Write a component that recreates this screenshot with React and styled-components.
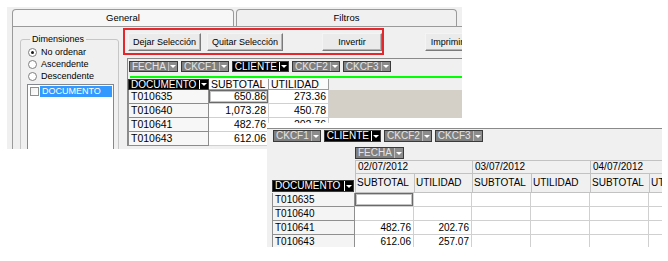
import styled, { createGlobalStyle } from 'styled-components';

const GlobalStyle = createGlobalStyle`
  body {
    margin: 0;
    background: #fff;
    font-family: "Liberation Sans", Arial, sans-serif;
    color: #000;
  }
`;

const Canvas = styled.div`
  position: relative;
  width: 668px;
  height: 261px;
  overflow: hidden;
  background: #fff;
  padding: 7px 0 0 7px;
  box-sizing: border-box;
`;

/* ---------- first screenshot ---------- */

const Window = styled.div`
  width: 455px;
  height: 142px;
  background: #f0f0f0;
  overflow: hidden;
  display: flex;
  flex-direction: column;
`;

const TabStrip = styled.div`
  display: flex;
  gap: 2px;
  height: 19px;
  padding: 2px 0 0 5px;
  box-sizing: border-box;
`;

const Tab = styled.div`
  width: ${p => p.$w}px;
  border: 1px solid #9a9a9a;
  border-bottom: none;
  border-radius: 4px 4px 0 0;
  background: ${p => (p.$active ? '#f7f7f7' : '#f0f0f0')};
  font-size: 9.5px;
  line-height: 15px;
  text-align: center;
  box-sizing: border-box;
`;

const Panel = styled.div`
  flex: 1;
  display: flex;
  align-items: flex-start;
  margin-left: 5px;
  padding-left: 7px;
  border-top: 1px solid #9a9a9a;
  border-left: 1px solid #9a9a9a;
  min-height: 0;
`;

const Group = styled.fieldset`
  width: 99px;
  height: 140px;
  margin: 7px 0 0 0;
  padding: 0 0 0 7px;
  border: 1px solid #c6c6c6;
  border-radius: 3px;
  box-sizing: border-box;
  min-width: 0;
`;

const Legend = styled.legend`
  margin-left: 2px;
  padding: 0 2px;
  font-size: 9px;
  line-height: 11px;
`;

const Options = styled.div`
  margin-top: 1px;
`;

const RadioRow = styled.label`
  display: flex;
  align-items: center;
  gap: 4px;
  height: 12px;
  font-size: 9px;
`;

const Radio = styled.span`
  width: 9px;
  height: 9px;
  border-radius: 50%;
  border: 1px solid #7f7f7f;
  background: #fff;
  box-sizing: border-box;
  display: flex;
  align-items: center;
  justify-content: center;

  &::after {
    content: '';
    width: 3px;
    height: 3px;
    border-radius: 50%;
    background: ${p => (p.$on ? '#1a1a1a' : 'transparent')};
  }
`;

const ListBox = styled.div`
  width: 87px;
  height: 80px;
  margin: 2px 0 0 -1px;
  padding: 1px;
  background: #fff;
  border: 1px solid #828790;
  box-sizing: border-box;
`;

const ListItem = styled.div`
  display: flex;
  align-items: center;
  gap: 1px;
  height: 11px;
`;

const Check = styled.span`
  width: 9px;
  height: 9px;
  margin-left: 1px;
  border: 1px solid #8e8f8f;
  background: linear-gradient(135deg, #f0f0f0, #fff);
  box-sizing: border-box;
`;

const Selected = styled.span`
  flex: 1;
  height: 11px;
  padding-left: 2px;
  background: #3399ff;
  color: #fff;
  font-size: 9px;
  line-height: 11px;
`;

const RightSide = styled.div`
  flex: 1;
  display: flex;
  flex-direction: column;
  margin-left: 4px;
  min-width: 0;
`;

const ButtonBar = styled.div`
  display: flex;
  align-items: flex-start;
  margin-top: 1px;
`;

const RedBox = styled.div`
  display: flex;
  gap: 6px;
  width: 270px;
  height: 27px;
  padding: 3px 0 0 3px;
  border: 2px solid #e5262b;
  box-sizing: border-box;
`;

const Button = styled.div`
  flex: none;
  width: ${p => p.$w}px;
  height: 18px;
  margin-left: ${p => p.$ml || 0}px;
  margin-top: ${p => p.$mt || 0}px;
  border: 1px solid;
  border-color: #f4f4f4 #7a7a7a #7a7a7a #f4f4f4;
  box-shadow: inset -1px -1px 0 #b4b4b4;
  background: #ebebeb;
  font-size: 9px;
  line-height: 16px;
  text-align: center;
  white-space: nowrap;
  overflow: hidden;
  box-sizing: border-box;
`;

const Pivot = styled.div`
  flex: 1;
  margin: 3px 0 0 4px;
  border-top: 1px solid #8a8a8a;
  border-left: 1px solid #8a8a8a;
`;

const FieldRow = styled.div`
  display: flex;
  gap: ${p => p.$gap || 3}px;
  height: ${p => p.$h}px;
  padding: ${p => p.$pad};
  box-sizing: border-box;
`;

const Field = styled.span`
  display: inline-flex;
  align-items: stretch;
  height: ${p => p.$h || 11}px;
  width: ${p => (p.$w ? `${p.$w}px` : 'auto')};
  border: 1px solid #3a3a3a;
  background: ${p => (p.$dark ? '#000' : '#7f7f7f')};
  box-sizing: border-box;
`;

const FieldLabel = styled.span`
  flex: 1;
  padding: 0 2px;
  color: ${p => (p.$dark ? '#fff' : '#e4e4e4')};
  font-size: 10px;
  line-height: ${p => p.$lh || 9}px;
  white-space: nowrap;
`;

const Drop = styled.span`
  width: 8px;
  display: flex;
  align-items: center;
  justify-content: center;
  border-left: 1px solid ${p => (p.$dark ? '#fff' : '#bdbdbd')};
  background: ${p => (p.$dark ? '#000' : '#8c8c8c')};

  &::after {
    content: '';
    border-left: 3px solid transparent;
    border-right: 3px solid transparent;
    border-top: 3px solid #fff;
  }
`;

const GreenLine = styled.div`
  height: 2px;
  margin: 3px 0 1px 2px;
  background: #00ff00;
`;

const Grid1 = styled.div`
  display: grid;
  grid-template-columns: 81px 60px 60px 1fr;
  grid-template-rows: 11px repeat(4, 14px);
`;

const HeadCell = styled.div`
  padding-left: 2px;
  background: #fbfbfb;
  border-right: 1px solid #9c9c9c;
  border-bottom: 1px solid #9c9c9c;
  font-size: 10.5px;
  line-height: 10px;
  white-space: nowrap;
  overflow: hidden;
`;

const RowHead = styled.div`
  padding-left: 2px;
  background: #f7f7f7;
  border: 1px solid #8c8c8c;
  border-top: none;
  font-size: 10.5px;
  line-height: 13px;
  box-sizing: border-box;
`;

const Cell = styled.div`
  padding-right: 2px;
  background: #fff;
  border-right: 1px solid #d0d0d0;
  border-bottom: 1px solid #d0d0d0;
  box-shadow: ${p => (p.$focus ? 'inset 0 0 0 1px #6a6a6a, inset 0 0 0 2px #c4c4c4' : 'none')};
  font-size: ${p => p.$fs || 10.5}px;
  line-height: 13px;
  text-align: right;
  box-sizing: border-box;
`;

const Fill = styled.div`
  background: ${p => (p.$beige ? '#d4d0c8' : '#fff')};
`;

/* ---------- second screenshot (pasted over the first) ---------- */

const Overlay = styled.div`
  position: absolute;
  left: 267px;
  top: 123px;
  width: 395px;
  height: 124px;
  padding-top: 5px;
  background: #fff;
  box-sizing: border-box;
  overflow: hidden;
  display: flex;
  flex-direction: column;
`;

const Pivot2 = styled.div`
  flex: 1;
  background: #f0f0f0;
  border-top: 1px solid #8a8a8a;
`;

const Grid2 = styled.div`
  display: grid;
  grid-template-columns: 5px 83px 59px 58px 59px 59px 59px 59px;
  grid-template-rows: 18px 13px 20px repeat(4, 14px);
`;

const Slot = styled.div`
  grid-column: ${p => p.$col};
  display: flex;
  align-items: flex-end;
  padding-bottom: ${p => p.$pb || 0}px;
`;

const DateCell = styled.div`
  grid-column: span 2;
  padding-left: 2px;
  border-left: 1px solid #c2c2c2;
  border-top: 1px solid #c2c2c2;
  font-size: 10px;
  line-height: 12px;
  white-space: nowrap;
  overflow: hidden;
`;

const HeadCell2 = styled.div`
  padding-left: 1px;
  border-left: 1px solid #c2c2c2;
  border-top: 1px solid #c2c2c2;
  border-bottom: 1px solid #c2c2c2;
  font-size: 10px;
  line-height: 18px;
  white-space: nowrap;
  overflow: hidden;
`;

const RowHead2 = styled.div`
  grid-column: 2;
  padding-left: 2px;
  background: #f4f4f4;
  border: 1px solid #8f8f8f;
  border-top: none;
  font-size: 10px;
  line-height: 13px;
  box-sizing: border-box;
`;

const fields1 = [
  { name: 'FECHA' },
  { name: 'CKCF1' },
  { name: 'CLIENTE', dark: true },
  { name: 'CKCF2' },
  { name: 'CKCF3' },
];

const fields2 = [
  { name: 'CKCF1' },
  { name: 'CLIENTE', dark: true },
  { name: 'CKCF2' },
  { name: 'CKCF3' },
];

const rows1 = [
  ['T010635', '650.86', '273.36'],
  ['T010640', '1,073.28', '450.78'],
  ['T010641', '482.76', '202.76'],
  ['T010643', '612.06', '257.07'],
];

const rows2 = [
  ['T010635', '', ''],
  ['T010640', '', ''],
  ['T010641', '482.76', '202.76'],
  ['T010643', '612.06', '257.07'],
];

function PivotField({ name, dark, h, lh, w }) {
  return (
    <Field $dark={dark} $h={h} $w={w}>
      <FieldLabel $dark={dark} $lh={lh}>{name}</FieldLabel>
      <Drop $dark={dark} />
    </Field>
  );
}

export default function App() {
  return (
    <>
      <GlobalStyle />
      <Canvas>
        <Window>
          <TabStrip>
            <Tab $w={222} $active>General</Tab>
            <Tab $w={221}>Filtros</Tab>
          </TabStrip>
          <Panel>
            <Group>
              <Legend>Dimensiones</Legend>
              <Options>
                <RadioRow><Radio $on />No ordenar</RadioRow>
                <RadioRow><Radio />Ascendente</RadioRow>
                <RadioRow><Radio />Descendente</RadioRow>
              </Options>
              <ListBox>
                <ListItem>
                  <Check />
                  <Selected>DOCUMENTO</Selected>
                </ListItem>
              </ListBox>
            </Group>
            <RightSide>
              <ButtonBar>
                <RedBox>
                  <Button $w={73}>Dejar Selección</Button>
                  <Button $w={76}>Quitar Selección</Button>
                  <Button $w={60} $ml={33}>Invertir</Button>
                </RedBox>
                <Button $w={44} $ml={41} $mt={5}>Imprimir</Button>
              </ButtonBar>
              <Pivot>
                <FieldRow $h={14} $pad="2px 0 0 1px">
                  {fields1.map(f => (
                    <PivotField key={f.name} name={f.name} dark={f.dark} />
                  ))}
                </FieldRow>
                <GreenLine />
                <Grid1>
                  <PivotField name="DOCUMENTO" dark h={11} />
                  <HeadCell>SUBTOTAL</HeadCell>
                  <HeadCell>UTILIDAD</HeadCell>
                  <div />
                  {rows1.map((r, i) => [
                    <RowHead key={`h${i}`}>{r[0]}</RowHead>,
                    <Cell key={`s${i}`} $focus={i === 0}>{r[1]}</Cell>,
                    <Cell key={`u${i}`}>{r[2]}</Cell>,
                    <Fill key={`f${i}`} $beige={i < 2} />,
                  ])}
                </Grid1>
              </Pivot>
            </RightSide>
          </Panel>
        </Window>

        <Overlay>
          <Pivot2>
            <FieldRow $h={13} $pad="1px 0 0 6px">
              {fields2.map(f => (
                <PivotField key={f.name} name={f.name} dark={f.dark} h={12} lh={10} />
              ))}
            </FieldRow>
            <Grid2>
              <Slot $col="3 / span 6" $pb={1}>
                <PivotField name="FECHA" h={12} lh={10} />
              </Slot>
              <Slot $col="1 / span 2" />
              <DateCell>02/07/2012</DateCell>
              <DateCell>03/07/2012</DateCell>
              <DateCell>04/07/2012</DateCell>
              <Slot $col="2" $pb={1}>
                <PivotField name="DOCUMENTO" dark h={12} lh={10} w={82} />
              </Slot>
              {['SUBTOTAL', 'UTILIDAD', 'SUBTOTAL', 'UTILIDAD', 'SUBTOTAL', 'UTILIDAD'].map((t, i) => (
                <HeadCell2 key={i}>{t}</HeadCell2>
              ))}
              {rows2.map((r, i) => [
                <RowHead2 key={`h${i}`}>{r[0]}</RowHead2>,
                <Cell key={`s${i}`} $fs={10} $focus={i === 0}>{r[1]}</Cell>,
                <Cell key={`u${i}`} $fs={10}>{r[2]}</Cell>,
                <Cell key={`a${i}`} />,
                <Cell key={`b${i}`} />,
                <Cell key={`c${i}`} />,
                <Cell key={`d${i}`} />,
              ])}
            </Grid2>
          </Pivot2>
        </Overlay>
      </Canvas>
    </>
  );
}
